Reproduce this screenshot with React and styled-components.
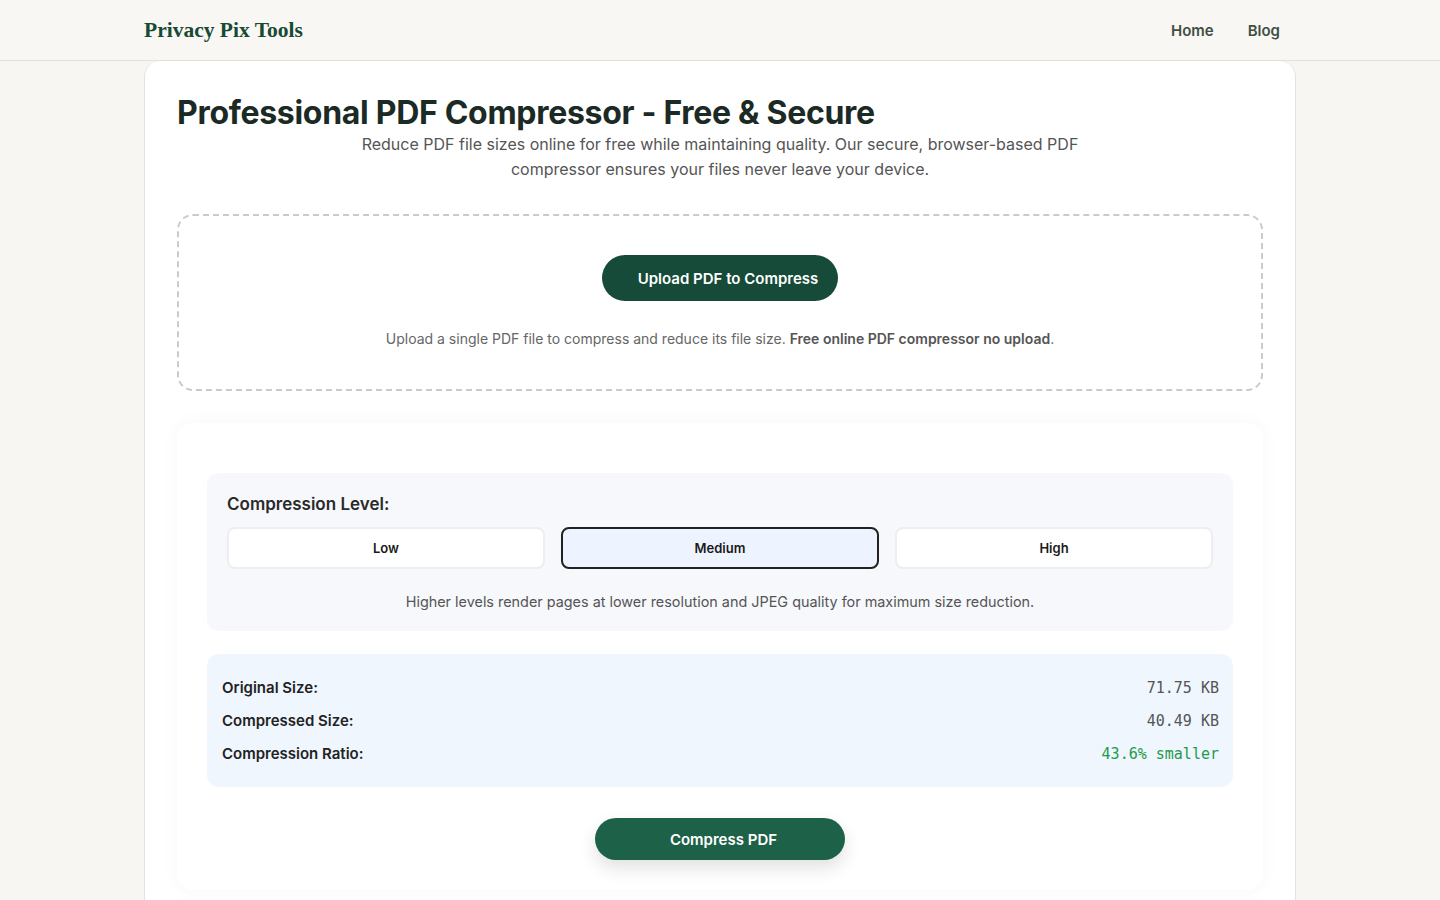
import styled, { createGlobalStyle } from 'styled-components';

const GlobalStyle = createGlobalStyle`
  html, body {
    margin: 0;
    padding: 0;
    background: #f8f6f2;
    font-family: Inter, 'Noto Sans', sans-serif;
    color: #1b2a24;
  }
  * { box-sizing: border-box; }
`;

// Header
const Header = styled.header`
  height: 61px;
  background: #f9f7f3;
  border-bottom: 1px solid #e4e1d8;
`;

const HeaderInner = styled.div`
  max-width: 1152px;
  height: 100%;
  margin: 0 auto;
  display: flex;
  align-items: center;
  justify-content: space-between;
`;

const Logo = styled.a`
  font-family: 'Liberation Serif', 'DejaVu Serif', serif;
  font-weight: 700;
  font-size: 21.5px;
  color: #174a35;
  text-decoration: none;
`;

const Nav = styled.nav`
  display: flex;
  gap: 2px;
`;

const NavLink = styled.a`
  padding: 8px 16px;
  font-size: 15px;
  font-weight: 600;
  color: #3f4f46;
  text-decoration: none;
`;

// Main card
const Main = styled.main`
  max-width: 1152px;
  margin: 0 auto;
`;

const Card = styled.section`
  background: #fff;
  border: 1px solid #e6e3dc;
  border-top: none;
  border-radius: 16px;
  padding: 31px 32px 40px;
`;

const Title = styled.h1`
  margin: 0 0 -2px;
  font-size: 32px;
  line-height: 42px;
  font-weight: 700;
  color: #1b2a24;
  letter-spacing: -0.3px;
`;

const Subtitle = styled.p`
  max-width: 730px;
  margin: 0 auto;
  text-align: center;
  font-size: 16px;
  line-height: 25px;
  color: #555;
`;

const DropZone = styled.div`
  margin-top: 32px;
  border: 2px dashed #cdcac3;
  border-radius: 16px;
  padding: 39px 20px 40px;
  display: flex;
  flex-direction: column;
  align-items: center;
`;

const PillButton = styled.button`
  border: none;
  border-radius: 999px;
  background: ${(p) => (p.$light ? '#1e6149' : '#164b39')};
  color: #fff;
  font-family: Inter, sans-serif;
  font-weight: 600;
  font-size: 15px;
  height: ${(p) => (p.$light ? '42px' : '46px')};
  width: ${(p) => (p.$light ? '250px' : '236px')};
  padding: 0 0 0 ${(p) => (p.$light ? '7px' : '16px')};
  cursor: pointer;
  box-shadow: ${(p) => (p.$light ? '0 8px 18px rgba(0,0,0,0.12)' : 'none')};
`;

const Hint = styled.p`
  margin: 28px 0 0;
  font-size: 14px;
  line-height: 20px;
  color: #666;
  strong { color: #555; font-weight: 600; }
`;

const OptionsCard = styled.div`
  margin-top: 32px;
  background: #fff;
  border-radius: 16px;
  box-shadow: 0 0 20px rgba(0, 0, 0, 0.035);
  padding: 50px 30px 30px;
  display: flex;
  flex-direction: column;
  align-items: center;
`;

const LevelPanel = styled.div`
  width: 100%;
  background: #f6f8fc;
  border-radius: 12px;
  padding: 20px 20px 19px;
`;

const Label = styled.div`
  font-size: 17px;
  line-height: 22px;
  font-weight: 600;
  color: #2a2a2a;
`;

const LevelRow = styled.div`
  margin-top: 12px;
  display: grid;
  grid-template-columns: repeat(3, 1fr);
  gap: 16px;
`;

const LevelButton = styled.button`
  height: 42px;
  border-radius: 8px;
  border: ${(p) => (p.$active ? '2px solid #222' : '2px solid #eceef2')};
  background: ${(p) => (p.$active ? '#eef4ff' : '#fff')};
  font-family: Inter, sans-serif;
  font-size: 13px;
  font-weight: 600;
  color: #1a1a1a;
  cursor: pointer;
`;

const LevelNote = styled.p`
  margin: 23px 0 0;
  text-align: center;
  font-size: 14.4px;
  line-height: 20px;
  color: #555;
`;

const Stats = styled.div`
  width: 100%;
  margin-top: 23px;
  background: #f0f6fe;
  border-radius: 12px;
  padding: 17px 14px 17px 15px;
`;

const StatRow = styled.div`
  display: flex;
  justify-content: space-between;
  align-items: center;
  height: 33px;
`;

const StatLabel = styled.span`
  font-size: 15px;
  font-weight: 600;
  color: #222;
`;

const StatValue = styled.span`
  font-family: 'DejaVu Sans Mono', 'Liberation Mono', monospace;
  font-size: 15px;
  color: ${(p) => (p.$good ? '#1f9a4b' : '#555')};
`;

const Action = styled.div`
  margin-top: 31px;
`;

const stats = [
  { label: 'Original Size:', value: '71.75 KB' },
  { label: 'Compressed Size:', value: '40.49 KB' },
  { label: 'Compression Ratio:', value: '43.6% smaller', good: true },
];

const levels = ['Low', 'Medium', 'High'];

const App = () => (
  <>
    <GlobalStyle />
    <Header>
      <HeaderInner>
        <Logo href="#">Privacy Pix Tools</Logo>
        <Nav>
          <NavLink href="#">Home</NavLink>
          <NavLink href="#">Blog</NavLink>
        </Nav>
      </HeaderInner>
    </Header>

    <Main>
      <Card>
        <Title>Professional PDF Compressor - Free &amp; Secure</Title>
        <Subtitle>
          Reduce PDF file sizes online for free while maintaining quality. Our secure, browser-based PDF
          compressor ensures your files never leave your device.
        </Subtitle>

        <DropZone>
          <PillButton>Upload PDF to Compress</PillButton>
          <Hint>
            Upload a single PDF file to compress and reduce its file size.{' '}
            <strong>Free online PDF compressor no upload</strong>.
          </Hint>
        </DropZone>

        <OptionsCard>
          <LevelPanel>
            <Label>Compression Level:</Label>
            <LevelRow>
              {levels.map((level) => (
                <LevelButton key={level} $active={level === 'Medium'}>
                  {level}
                </LevelButton>
              ))}
            </LevelRow>
            <LevelNote>
              Higher levels render pages at lower resolution and JPEG quality for maximum size reduction.
            </LevelNote>
          </LevelPanel>

          <Stats>
            {stats.map(({ label, value, good }) => (
              <StatRow key={label}>
                <StatLabel>{label}</StatLabel>
                <StatValue $good={good}>{value}</StatValue>
              </StatRow>
            ))}
          </Stats>

          <Action>
            <PillButton $light>Compress PDF</PillButton>
          </Action>
        </OptionsCard>
      </Card>
    </Main>
  </>
);

export default App;
